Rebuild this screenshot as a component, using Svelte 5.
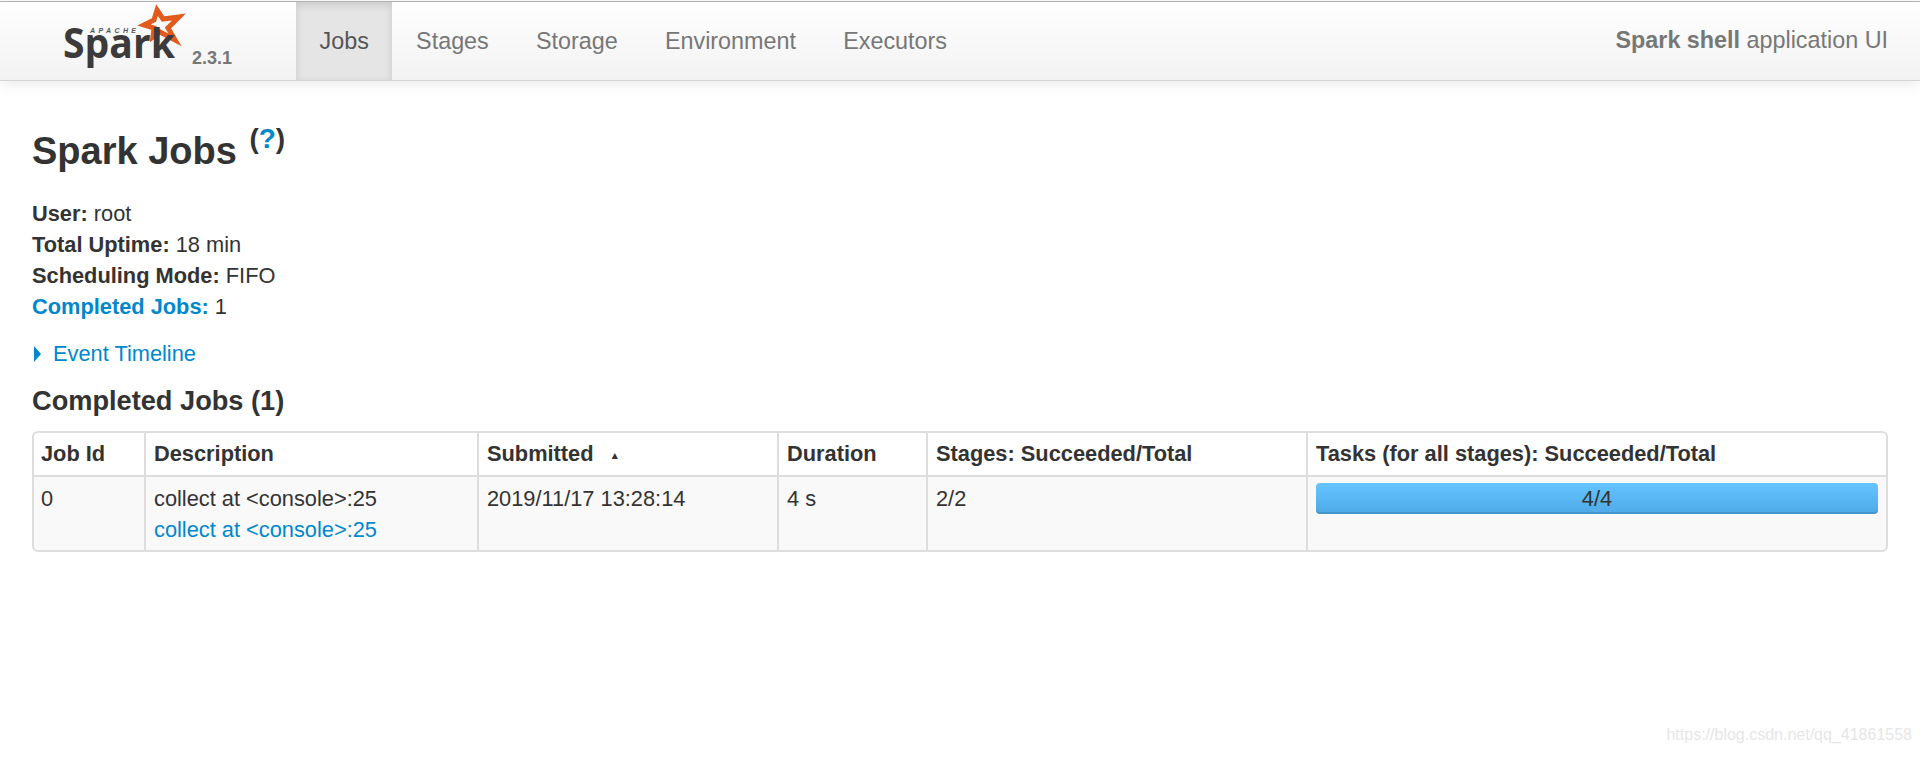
<script>
  const columns = [
    { label: 'Job Id', width: 110 },
    { label: 'Description', width: 333 },
    { label: 'Submitted', width: 300, sorted: true },
    { label: 'Duration', width: 149 },
    { label: 'Stages: Succeeded/Total', width: 380 },
    { label: 'Tasks (for all stages): Succeeded/Total', width: 580 }
  ]
  const tabs = ['Jobs', 'Stages', 'Storage', 'Environment', 'Executors']
</script>

<header class="navbar">
  <div class="brand">
    <svg class="logo" width="140" height="70" viewBox="0 0 140 70">
      <path class="star" d="M107 7 L113 16 L129 14 L118 25 L125 37 L110 29 L103 34 L104 25 L94 22 L104 17 Z" />
      <text class="apache" x="40" y="30" textLength="46">APACHE</text>
      <text class="spark" x="13" y="55" textLength="112" lengthAdjust="spacingAndGlyphs">Spark</text>
    </svg>
    <span class="version">2.3.1</span>
  </div>
  <nav class="tabs">
    {#each tabs as tab, i}
      <span class="tab" class:active={i === 0}>{tab}</span>
    {/each}
  </nav>
  <p class="app-name"><strong>Spark shell</strong> application UI</p>
</header>

<main>
  <h3>Spark Jobs <sup>(<span class="link">?</span>)</sup></h3>

  <ul class="summary">
    <li><strong>User:</strong> root</li>
    <li><strong>Total Uptime:</strong> 18 min</li>
    <li><strong>Scheduling Mode:</strong> FIFO</li>
    <li><strong class="link">Completed Jobs:</strong> 1</li>
  </ul>

  <div class="timeline link"><span class="arrow"></span>Event Timeline</div>

  <h4>Completed Jobs (1)</h4>

  <table>
    <colgroup>
      {#each columns as col}
        <col style="width: {col.width}px" />
      {/each}
    </colgroup>
    <thead>
      <tr>
        {#each columns as col}
          <th>{col.label}{#if col.sorted}<span class="sort">▴</span>{/if}</th>
        {/each}
      </tr>
    </thead>
    <tbody>
      <tr>
        <td>0</td>
        <td>collect at &lt;console&gt;:25<br /><span class="link">collect at &lt;console&gt;:25</span></td>
        <td>2019/11/17 13:28:14</td>
        <td>4 s</td>
        <td>2/2</td>
        <td><div class="progress">4/4</div></td>
      </tr>
    </tbody>
  </table>
</main>

<div class="watermark">https://blog.csdn.net/qq_41861558</div>

<style>
  :global(body) {
    margin: 0;
    background: #fff;
    color: #333;
    font-family: "Liberation Sans", Arial, sans-serif;
    font-size: 21.8px;
    line-height: 31px;
    overflow: hidden;
  }

  .navbar {
    display: flex;
    align-items: stretch;
    height: 78px;
    margin-top: 1px;
    border-top: 1px solid #b4b4b4;
    border-bottom: 1px solid #d4d4d4;
    background: linear-gradient(to bottom, #fff, #f2f2f2);
    box-shadow: 0 2px 14px rgba(0, 0, 0, 0.1);
  }

  .brand {
    display: flex;
    width: 296px;
    box-sizing: border-box;
    padding-left: 50px;
  }

  .logo {
    flex: none;
    margin-top: 1px;
  }

  .star {
    fill: none;
    stroke: #e25a1c;
    stroke-width: 5;
    stroke-linejoin: miter;
  }

  .apache {
    font-size: 7px;
    font-weight: 700;
    font-style: italic;
    fill: #555;
  }

  .spark {
    font-family: "Open Sans", sans-serif;
    font-size: 42px;
    font-weight: 700;
    fill: #3c3a3a;
  }

  .version {
    margin: 41px 0 0 2px;
    font-size: 18px;
    font-weight: 700;
    color: #777;
  }

  .tabs {
    display: flex;
  }

  .tab {
    padding: 0 23.6px;
    line-height: 78px;
    font-size: 23.35px;
    color: #777;
  }

  .tab.active {
    padding-right: 22.6px;
    margin-right: 1px;
    background: #e5e5e5;
    box-shadow: inset 0 3px 8px rgba(0, 0, 0, 0.125);
    color: #555;
  }

  .app-name {
    margin: 0 32px 0 auto;
    line-height: 76px;
    font-size: 23.35px;
    color: #777;
  }

  main {
    padding: 0 32px;
  }

  h3 {
    margin: 39px 0 0;
    height: 78px;
    font-size: 38px;
    line-height: 62px;
    font-weight: 700;
  }

  h3 sup {
    display: inline-block;
    margin-left: 2px;
    font-size: 28px;
    line-height: 0;
    vertical-align: baseline;
    transform: translateY(-16px);
  }

  .link {
    color: #0088cc;
  }

  .summary {
    list-style: none;
    margin: 0;
    padding: 0;
  }

  .timeline {
    display: flex;
    align-items: center;
    margin-top: 16px;
  }

  .arrow {
    width: 0;
    height: 0;
    margin: 0 12px 0 2px;
    border-left: 7px solid #0088cc;
    border-top: 8px solid transparent;
    border-bottom: 8px solid transparent;
  }

  h4 {
    margin: 14px 0 0;
    font-size: 27.2px;
    line-height: 36px;
    font-weight: 700;
  }

  table {
    box-sizing: border-box;
    table-layout: fixed;
    width: 1856px;
    margin-top: 12px;
    border-collapse: separate;
    border-spacing: 0;
    border: 2px solid #ddd;
    border-radius: 6px;
  }

  th, td {
    text-align: left;
    vertical-align: top;
    border-left: 2px solid #ddd;
  }

  th:first-child, td:first-child {
    border-left: 0;
    padding-left: 7px;
  }

  th {
    padding: 5px 8px 4px 8px;
    font-weight: 700;
    border-bottom: 2px solid #ddd;
  }

  td {
    padding: 7px 8px 5px 8px;
    line-height: 30.5px;
    background: #f9f9f9;
  }

  tr td:first-child {
    border-bottom-left-radius: 5px;
  }

  tr td:last-child {
    border-bottom-right-radius: 5px;
  }

  .sort {
    margin-left: 18px;
    font-size: 11px;
    vertical-align: 2px;
  }

  .progress {
    height: 31px;
    margin-top: -1px;
    line-height: 31px;
    text-align: center;
    border-radius: 4px;
    background: linear-gradient(to bottom, #64c5ff, #4fa9e6);
    box-shadow: inset 0 -2px 0 rgba(0, 0, 0, 0.12);
  }

  .watermark {
    position: absolute;
    right: 8px;
    bottom: 16px;
    font-size: 16px;
    line-height: 20px;
    color: #e6e6e6;
    white-space: nowrap;
  }
</style>
